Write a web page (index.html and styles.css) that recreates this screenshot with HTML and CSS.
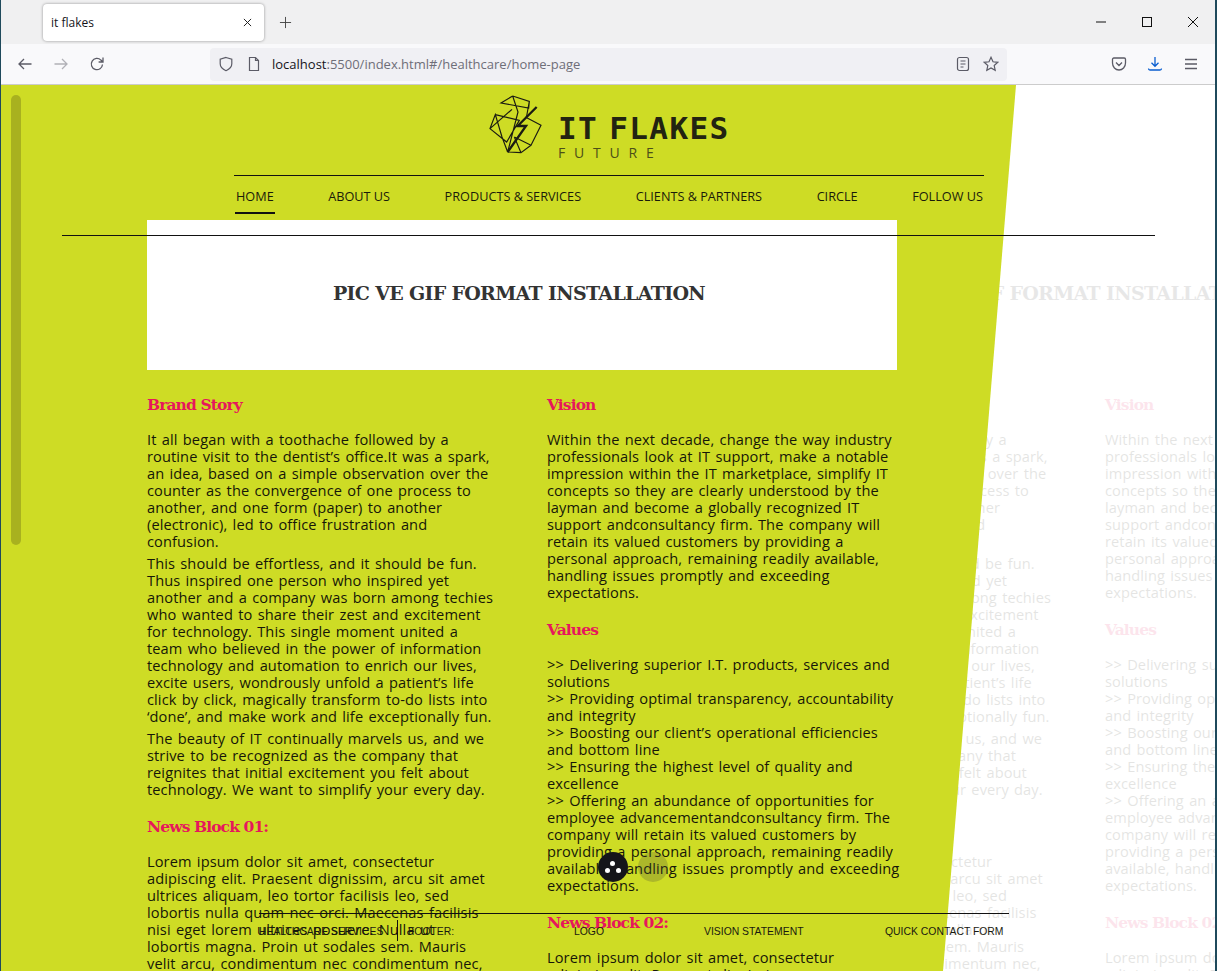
FILE: index.html
```html
<!DOCTYPE html>
<html lang="en">
<head>
<meta charset="utf-8">
<title>it flakes</title>
<link rel="stylesheet" href="styles.css">
</head>
<body>
<div class="window">
  <header class="tabbar">
    <div class="tab"><span class="tab-title">it flakes</span>
      <svg class="tab-close" viewBox="0 0 10 10"><path d="M1 1l8 8M9 1l-8 8"/></svg></div>
    <svg class="new-tab" viewBox="0 0 14 14"><path d="M7 1v12M1 7h12"/></svg>
    <div class="win-controls">
      <svg viewBox="0 0 12 12"><path d="M1 6h10"/></svg>
      <svg viewBox="0 0 12 12"><rect x="1.5" y="1.5" width="9" height="9"/></svg>
      <svg viewBox="0 0 12 12"><path d="M1 1l10 10M11 1L1 11"/></svg>
    </div>
  </header>
  <nav class="toolbar">
    <svg class="tool" viewBox="0 0 16 16"><path d="M14.5 8H2M7 3L2 8l5 5"/></svg>
    <svg class="tool tool-off" viewBox="0 0 16 16"><path d="M1.5 8H14M9 3l5 5-5 5"/></svg>
    <svg class="tool" viewBox="0 0 16 16"><path d="M13.5 8.5a5.6 5.6 0 1 1-1.6-4.4L14 6M14 1.5V6H9.6"/></svg>
    <div class="urlbar">
      <svg class="url-icon" viewBox="0 0 16 16"><path d="M8 1.500l5.800 1.800v4.500c0 3.200-2.500 5.500-5.800 6.900-3.300-1.400-5.800-3.700-5.800-6.900V3.300z"/></svg>
      <svg class="url-icon url-page" viewBox="0 0 16 16"><path d="M3.500 1.500h6l3 3v10h-9zM9.500 1.500v3h3"/></svg>
      <span class="url"><b>localhost</b>:5500/index.html#/healthcare/home-page</span>
      <svg class="url-icon url-reader" viewBox="0 0 16 16"><rect x="2.500" y="1.500" width="11" height="13" rx="2"/><path d="M5.500 5h5M5.500 8h5M5.500 11h3"/></svg>
      <svg class="url-icon" viewBox="0 0 16 16"><path d="M8 1.300l2 4.500 4.800.5-3.600 3.200 1 4.800L8 11.900l-4.200 2.400 1-4.800L1.200 6.300 6 5.800z"/></svg>
    </div>
    <div class="tool-right">
      <svg class="tool" viewBox="0 0 16 16"><path d="M2.800 2h10.400c.7 0 1.300.6 1.300 1.300V7c0 4-2.900 7-6.500 7S1.500 11 1.500 7V3.300C1.500 2.600 2.100 2 2.800 2zM5 6.500l3 3 3-3"/></svg>
      <svg class="tool tool-blue" viewBox="0 0 16 16"><path d="M8 1v9M4.500 6.800L8 10.300l3.500-3.500M1.500 12.500c0 1 .7 1.500 1.500 1.500h10c.8 0 1.500-.5 1.500-1.500"/></svg>
      <svg class="tool" viewBox="0 0 16 16"><path d="M2 3.500h12M2 8h12M2 12.500h12"/></svg>
    </div>
  </nav>

  <main class="viewport">
    <div class="ghost" aria-hidden="true">
      <div class="banner banner-clear"><div class="banner-title">PIC VE GIF FORMAT INSTALLATION</div></div>
      <div class="columns">
        <section class="col">
          <h2>Brand Story</h2>
          <p>It all began with a toothache followed by a<br>routine visit to the dentist’s office.It was a spark,<br>an idea, based on a simple observation over the<br>counter as the convergence of one process to<br>another, and one form (paper) to another<br>(electronic), led to office frustration and<br>confusion.</p>
          <p class="tight">This should be effortless, and it should be fun.<br>Thus inspired one person who inspired yet<br>another and a company was born among techies<br>who wanted to share their zest and excitement<br>for technology. This single moment united a<br>team who believed in the power of information<br>technology and automation to enrich our lives,<br>excite users, wondrously unfold a patient’s life<br>click by click, magically transform to-do lists into<br>‘done’, and make work and life exceptionally fun.</p>
          <p class="tight">The beauty of IT continually marvels us, and we<br>strive to be recognized as the company that<br>reignites that initial excitement you felt about<br>technology. We want to simplify your every day.</p>
          <h2 class="later">News Block 01:</h2>
          <p>Lorem ipsum dolor sit amet, consectetur<br>adipiscing elit. Praesent dignissim, arcu sit amet<br>ultrices aliquam, leo tortor facilisis leo, sed<br>lobortis nulla quam nec orci. Maecenas facilisis<br>nisi eget lorem ultrices posuere. Nulla ut<br>lobortis magna. Proin ut sodales sem. Mauris<br>velit arcu, condimentum nec condimentum nec,</p>
        </section>
        <section class="col">
          <h2>Vision</h2>
          <p>Within the next decade, change the way industry<br>professionals look at IT support, make a notable<br>impression within the IT marketplace, simplify IT<br>concepts so they are clearly understood by the<br>layman and become a globally recognized IT<br>support andconsultancy firm. The company will<br>retain its valued customers by providing a<br>personal approach, remaining readily available,<br>handling issues promptly and exceeding<br>expectations.</p>
          <h2 class="later">Values</h2>
          <p>&gt;&gt; Delivering superior I.T. products, services and<br>solutions<br>&gt;&gt; Providing optimal transparency, accountability<br>and integrity<br>&gt;&gt; Boosting our client’s operational efficiencies<br>and bottom line<br>&gt;&gt; Ensuring the highest level of quality and<br>excellence<br>&gt;&gt; Offering an abundance of opportunities for<br>employee advancementandconsultancy firm. The<br>company will retain its valued customers by<br>providing a personal approach, remaining readily<br>available, handling issues promptly and exceeding<br>expectations.</p>
          <h2 class="later">News Block 02:</h2>
          <p>Lorem ipsum dolor sit amet, consectetur<br>adipiscing elit. Praesent dignissim, arcu</p>
        </section>
      </div>
    </div>

    <div class="panel">
      <div class="brand">
        <svg class="logo-mark" viewBox="0 0 210 198">
          <path d="M80 12L96 60 65 180M80 12L45 33 128 48 130 28 80 12M130 28L122 72M28 68L100 85 62 150 12 110 28 68 48 135M12 110L78 52M118 75L165 100 135 160 85 135M65 180L105 182 135 160M105 182L85 135M48 135L65 180"/>
          <path class="logo-bolt" d="M152 45L95 102H120L65 180"/>
        </svg>
        <div class="brand-text">
          <div class="brand-name">IT FLAKES</div>
          <div class="brand-sub">FUTURE</div>
        </div>
      </div>
      <ul class="menu">
        <li class="active">HOME</li>
        <li>ABOUT US</li>
        <li>PRODUCTS &amp; SERVICES</li>
        <li>CLIENTS &amp; PARTNERS</li>
        <li>CIRCLE</li>
        <li>FOLLOW US</li>
      </ul>
      <div class="banner"><div class="banner-title">PIC VE GIF FORMAT INSTALLATION</div></div>
      <div class="columns">
        <section class="col">
          <h2>Brand Story</h2>
          <p>It all began with a toothache followed by a<br>routine visit to the dentist’s office.It was a spark,<br>an idea, based on a simple observation over the<br>counter as the convergence of one process to<br>another, and one form (paper) to another<br>(electronic), led to office frustration and<br>confusion.</p>
          <p class="tight">This should be effortless, and it should be fun.<br>Thus inspired one person who inspired yet<br>another and a company was born among techies<br>who wanted to share their zest and excitement<br>for technology. This single moment united a<br>team who believed in the power of information<br>technology and automation to enrich our lives,<br>excite users, wondrously unfold a patient’s life<br>click by click, magically transform to-do lists into<br>‘done’, and make work and life exceptionally fun.</p>
          <p class="tight">The beauty of IT continually marvels us, and we<br>strive to be recognized as the company that<br>reignites that initial excitement you felt about<br>technology. We want to simplify your every day.</p>
          <h2 class="later">News Block 01:</h2>
          <p>Lorem ipsum dolor sit amet, consectetur<br>adipiscing elit. Praesent dignissim, arcu sit amet<br>ultrices aliquam, leo tortor facilisis leo, sed<br>lobortis nulla quam nec orci. Maecenas facilisis<br>nisi eget lorem ultrices posuere. Nulla ut<br>lobortis magna. Proin ut sodales sem. Mauris<br>velit arcu, condimentum nec condimentum nec,</p>
        </section>
        <section class="col">
          <h2>Vision</h2>
          <p>Within the next decade, change the way industry<br>professionals look at IT support, make a notable<br>impression within the IT marketplace, simplify IT<br>concepts so they are clearly understood by the<br>layman and become a globally recognized IT<br>support andconsultancy firm. The company will<br>retain its valued customers by providing a<br>personal approach, remaining readily available,<br>handling issues promptly and exceeding<br>expectations.</p>
          <h2 class="later">Values</h2>
          <p>&gt;&gt; Delivering superior I.T. products, services and<br>solutions<br>&gt;&gt; Providing optimal transparency, accountability<br>and integrity<br>&gt;&gt; Boosting our client’s operational efficiencies<br>and bottom line<br>&gt;&gt; Ensuring the highest level of quality and<br>excellence<br>&gt;&gt; Offering an abundance of opportunities for<br>employee advancementandconsultancy firm. The<br>company will retain its valued customers by<br>providing a personal approach, remaining readily<br>available, handling issues promptly and exceeding<br>expectations.</p>
          <h2 class="later">News Block 02:</h2>
          <p>Lorem ipsum dolor sit amet, consectetur<br>adipiscing elit. Praesent dignissim, arcu</p>
        </section>
      </div>
      <div class="scroll-thumb"></div>
    </div>

    <div class="rule-top"></div>
    <div class="rule-bottom"></div>
    <div class="dots">
      <span class="dot-btn"><i></i><i></i><i></i></span>
      <span class="dot-btn dot-off"></span>
    </div>
    <footer class="foot">
      <span class="f1">HEALTHCARE SERVICES</span>
      <span class="f2">FOOTER:</span>
      <span class="f3">LOGO</span>
      <span class="f4">VISION STATEMENT</span>
      <span class="f5">QUICK CONTACT FORM</span>
    </footer>
  </main>
</div>
</body>
</html>
```
FILE: styles.css
```css
* { box-sizing: border-box; }
html, body { margin: 0; height: 100%; overflow: hidden; background: #fff; }
.window {
  width: 1217px; height: 971px; display: flex; flex-direction: column; overflow: hidden;
  border-left: 1px solid #1f4a5c; border-right: 2px solid #1f4a5c;
  font-family: "Open Sans", "Liberation Sans", sans-serif;
}
.tabbar { height: 44px; flex: none; background: #f0f0f1; display: flex; align-items: center; padding-left: 42px; }
.tab {
  width: 221px; height: 37px; margin-top: 1px; background: #fff; border-radius: 4px; box-shadow: 0 0 3px rgba(0,0,0,.4);
  display: flex; align-items: center; justify-content: space-between; padding: 0 12px 0 8px;
}
.tab-title { font-size: 12px; color: #15141a; }
.tab-close { width: 9px; height: 9px; fill: none; stroke: #222; stroke-width: 1.1; }
.new-tab { width: 13px; height: 13px; margin-left: 15px; fill: none; stroke: #444; stroke-width: 1; }
.win-controls { margin-left: auto; display: flex; gap: 34px; padding-right: 16px; }
.win-controls svg { width: 12px; height: 12px; fill: none; stroke: #111; stroke-width: 1; }
.toolbar { height: 41px; flex: none; background: #f9f9fb; display: flex; align-items: center; padding: 0 16px; border-bottom: 1px solid #ccc; }
.tool { width: 16px; height: 16px; fill: none; stroke: #5b5b66; stroke-width: 1.3; flex: none; }
.toolbar > .tool { margin-right: 20px; }
.toolbar > .tool:nth-of-type(3) { margin-right: 0; }
.tool-off { opacity: .45; }
.tool-blue { stroke: #0a5ed0; }
.urlbar { width: 797px; height: 33px; margin-left: 105px; background: #f0f0f4; border-radius: 4px; display: flex; align-items: center; padding: 0 8px; }
.url-icon { width: 16px; height: 16px; fill: none; stroke: #5b5b66; stroke-width: 1.2; flex: none; margin-right: 12px; }
.url-icon:last-child { margin-right: 0; }
.url-page { margin-right: 10px; }
.url { font-size: 13px; color: #6e6e78; white-space: nowrap; }
.url b { font-weight: 400; color: #15141a; }
.url-reader { margin-left: auto; }
.tool-right { margin-left: auto; display: flex; gap: 20px; }

.viewport { position: relative; flex: 1; overflow: hidden; background: #fff; color: #111; }
.panel {
  position: absolute; inset: 0; background: #cedc25;
  clip-path: polygon(0 0, 1015px 0, 942px 100%, 0 100%);
  overflow: hidden;
}
.ghost { position: absolute; left: 558px; top: 135px; width: 1000px; height: 800px; opacity: .11; }

.brand { display: flex; justify-content: center; align-items: flex-start; gap: 2px; padding-top: 7px; height: 90px; }
.logo-mark { width: 70px; height: 66px; fill: none; stroke: #1b1b12; stroke-width: 3.5; stroke-linejoin: miter; }
.logo-bolt { stroke-width: 7; }
.brand-text { padding-top: 22px; width: 172px; }
.brand-name { font-family: "DejaVu Sans Mono", monospace; font-weight: 700; font-size: 31px; line-height: 28px; letter-spacing: 1.4px; word-spacing: -9px; color: #222311; white-space: nowrap; }
.brand-sub { font-size: 14px; letter-spacing: 8.8px; line-height: 18px; margin-top: 2px; color: #4c4f18; }
.menu {
  list-style: none; margin: 0 0 0 233px; padding: 0; width: 750px; height: 45px; border-top: 1px solid #111;
  display: flex; justify-content: space-between; font-size: 12.7px;
}
.menu li { height: 38px; line-height: 41px; padding: 0 1px; white-space: nowrap; color: #1a1b0a; }
.menu .active { border-bottom: 2px solid #111; margin-left: 1px; }
.banner { margin-left: 146px; width: 750px; height: 150px; background: #fff; display: flex; align-items: center; justify-content: center; padding: 0 6px 5px 0; }
.banner-clear { background: none; }
.banner-title { font-family: "DejaVu Serif", serif; font-weight: 700; font-size: 19px; color: #333; white-space: nowrap; letter-spacing: -.68px; }
.columns { display: flex; padding: 24px 0 0 146px; gap: 50px; }
.col { width: 350px; flex: none; }
.col h2 { margin: 0 0 15px; font-family: "DejaVu Serif", serif; font-weight: 700; font-size: 15.5px; line-height: 22px; color: #e6175c; letter-spacing: -.9px; white-space: nowrap; }
.col h2.later { margin-top: 18px; }
.col p { margin: 0; font-family: "Open Sans", sans-serif; font-size: 14.6px; line-height: 17px; white-space: nowrap; letter-spacing: .1px; word-spacing: 1.4px; color: #161708; }
.col p.tight { margin-top: 5px; }
.scroll-thumb { position: absolute; left: 10px; top: 10px; width: 10px; height: 450px; border-radius: 5px; background: rgba(80,80,20,.3); }

.rule-top { position: absolute; left: 61px; top: 150px; width: 1093px; height: 1px; background: #111; }
.rule-bottom { position: absolute; left: 258px; top: 828px; width: 750px; height: 1px; background: #111; }
.dots { position: absolute; left: 597px; top: 767px; display: flex; gap: 10px; }
.dot-btn { position: relative; width: 30px; height: 30px; border-radius: 50%; background: #15151a; }
.dot-btn i { position: absolute; width: 5px; height: 5px; border-radius: 50%; background: #fff; }
.dot-btn i:nth-child(1) { left: 12px; top: 9px; }
.dot-btn i:nth-child(2) { left: 7px; top: 16px; }
.dot-btn i:nth-child(3) { left: 18px; top: 16px; }
.dot-off { background: rgba(70,70,60,.25); }
.foot { position: absolute; left: 0; right: 0; top: 840px; height: 14px; font-family: "Liberation Sans", sans-serif; font-size: 10.4px; line-height: 14px; color: #1a1a10; white-space: nowrap; }
.foot span { position: absolute; top: 0; }
.foot .f2 { left: 396px; top: -5px; height: 21px; line-height: 24px; border-left: 1px solid #111; padding-left: 10px; }
.f1 { left: 258px; }
.f3 { left: 573px; }
.f4 { left: 703px; }
.f5 { left: 884px; }
```
